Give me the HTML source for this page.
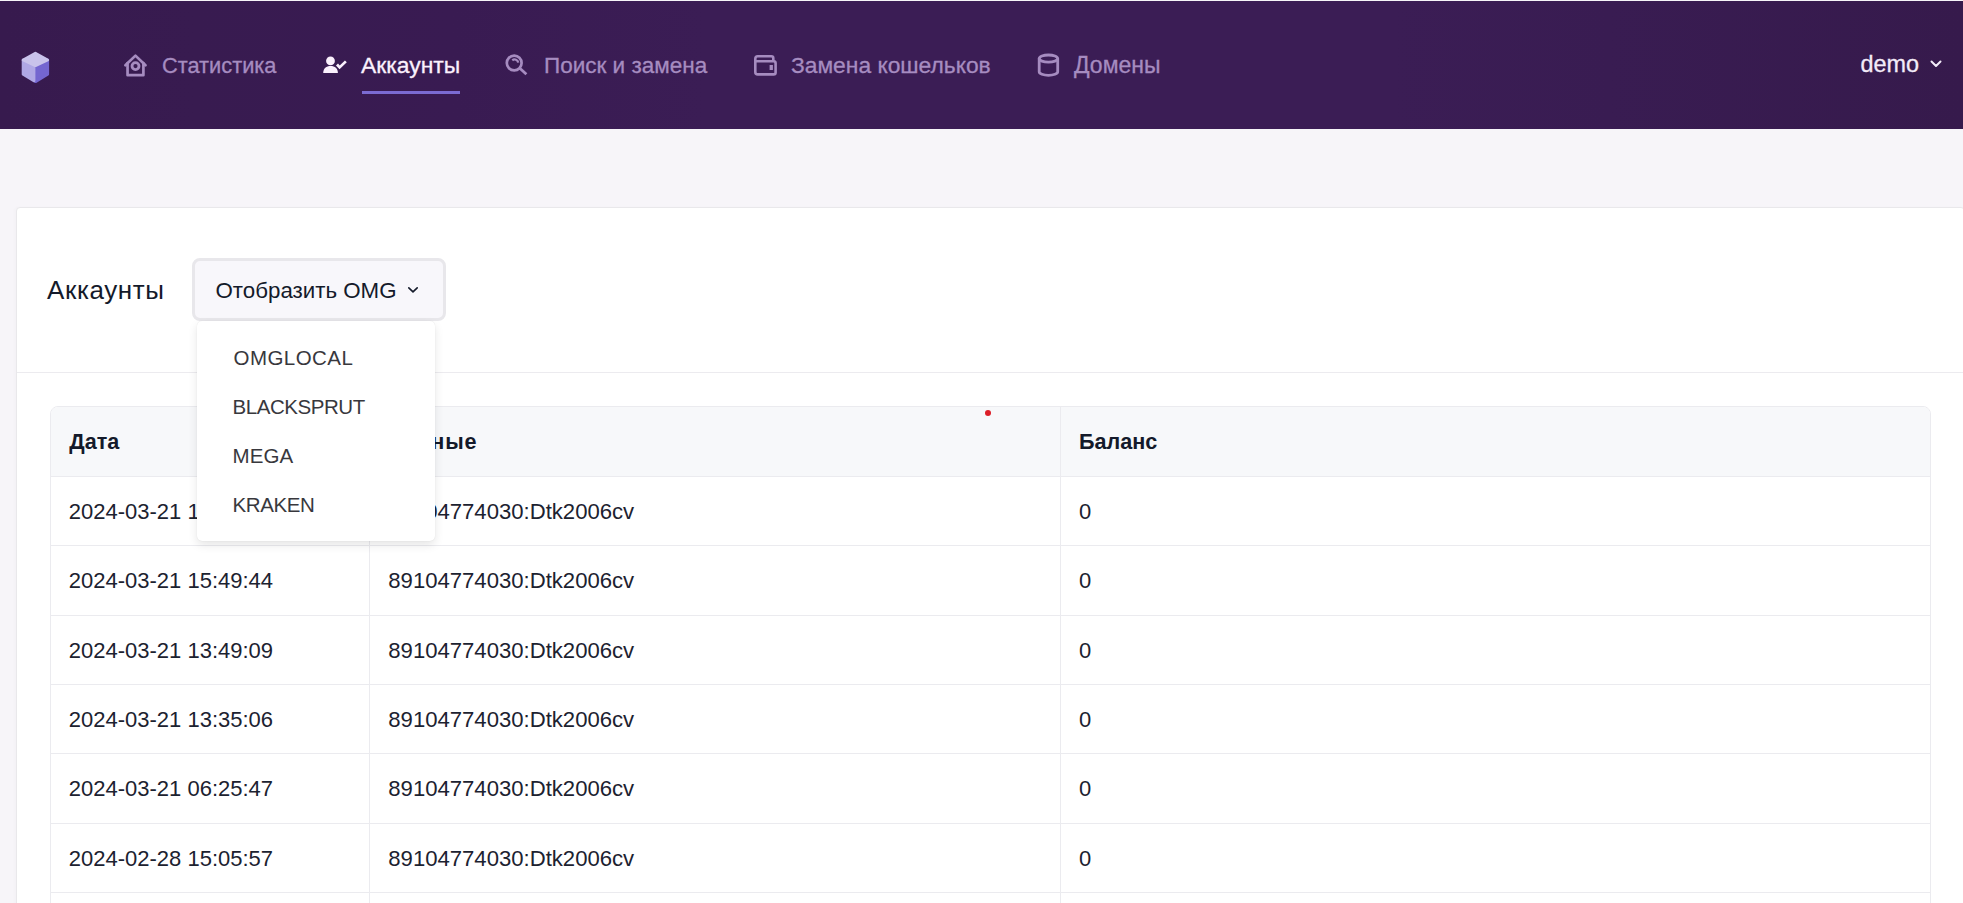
<!DOCTYPE html>
<html>
<head>
<meta charset="utf-8">
<style>
*{margin:0;padding:0;box-sizing:border-box;}
html,body{width:1963px;height:903px;overflow:hidden;}
body{background:#f7f5f9;font-family:"Liberation Sans",sans-serif;position:relative;}
.abs{position:absolute;white-space:nowrap;}
#hdr{position:absolute;left:0;top:1px;width:1963px;height:128px;background:linear-gradient(90deg,#371a4e 0%,#381b50 10%,#391b52 23%,#3b1d55 36%,#3b1d55 71%,#391c52 82%,#361a4c 100%);}
.nav{position:absolute;font-size:22px;line-height:22px;color:#a68cc0;white-space:nowrap;-webkit-text-stroke:0.3px currentColor;}
.nav.act{color:#fbf1fd;}
.ico{position:absolute;}
#card{position:absolute;left:16px;top:207px;width:1949px;height:720px;background:#fff;border:1px solid #e9e8eb;border-radius:4px;box-shadow:-2px 0 3px rgba(0,0,0,0.015);}
#sep{position:absolute;left:17px;top:372px;width:1946px;height:1px;background:#ecebef;}
#title{position:absolute;left:47px;top:277px;font-size:26px;line-height:26px;letter-spacing:0.6px;color:#141a2a;}
#btn{position:absolute;left:192.4px;top:258.1px;width:253.2px;height:62.5px;background:#f8f7fb;border:3.2px solid #e8e7eb;border-radius:8px;}
#btntxt{position:absolute;left:215.5px;top:280.3px;font-size:22.3px;line-height:22.3px;color:#141a2a;}
#tbl{position:absolute;left:50px;top:406px;width:1881px;height:600px;border:1px solid #ebebef;border-radius:8px 8px 0 0;background:#fff;overflow:hidden;}
#thead{position:absolute;left:0;top:0;width:100%;height:69px;background:#f7f8fa;}
.hl{position:absolute;left:0;width:100%;height:1px;background:#ebebef;}
.vl{position:absolute;top:0;width:1px;height:600px;background:#ebebef;}
.th{position:absolute;font-size:21.6px;line-height:21.6px;font-weight:bold;color:#141a2a;white-space:nowrap;}
.td{position:absolute;font-size:22px;line-height:22px;color:#1c2230;white-space:nowrap;}
#pop{position:absolute;left:197px;top:321px;width:238px;height:220px;background:#fff;border-radius:5px;box-shadow:0 4px 10px rgba(0,0,0,0.10),0 0 1px rgba(0,0,0,0.12);}
.it{position:absolute;font-size:20.5px;line-height:20.5px;letter-spacing:-0.45px;color:#38383d;white-space:nowrap;}
#dot{position:absolute;left:985.3px;top:410px;width:6px;height:6px;border-radius:50%;background:#dc1e28;}
</style>
</head>
<body>
<div id="hdr"></div>

<!-- logo cube -->
<svg class="ico" style="left:15px;top:45px" width="42" height="45" viewBox="0 0 42 45">
  <g stroke-width="3" stroke-linejoin="round">
  <path d="M32.6 15 L20.4 22 L20.4 36.6 L32.6 29.3 Z" fill="#7466d0" stroke="#7466d0"/>
  <path d="M8.2 15 L18.9 21.2 L18.9 35.7 L8.2 29.3 Z" fill="#b0a8e5" stroke="#b0a8e5"/>
  <path d="M20.4 8.2 L32.6 15 L20.4 20.6 L8.2 15 Z" fill="#c9c3eb" stroke="#c9c3eb"/>
  </g>
</svg>

<!-- house icon -->
<svg class="ico" style="left:120px;top:50px" width="32" height="30" viewBox="0 0 32 30">
  <g fill="none" stroke="#a68cc0" stroke-width="2.7" stroke-linecap="round" stroke-linejoin="round">
  <path d="M5.4 15.3 L15.45 5.6 L25.5 15.3"/>
  <path d="M7.55 13.2 V25.2 H23.4 V13.2"/>
  </g>
  <circle cx="15.5" cy="16.1" r="3.5" fill="none" stroke="#a68cc0" stroke-width="2.8"/>
</svg>
<div class="nav" style="left:162px;top:54.5px;font-size:21.8px">Статистика</div>

<!-- user check -->
<svg class="ico" style="left:322px;top:55px" width="26" height="20" viewBox="0 0 26 20">
  <circle cx="8.5" cy="5.9" r="4.4" fill="#fbf1fd"/>
  <path d="M1.2 17.9 C1.2 13.3 4.3 10.9 8.6 10.9 C12.9 10.9 15.9 13.3 15.9 17.9 Z" fill="#fbf1fd"/>
  <path d="M15.9 10.5 L17.6 12.4 L22.9 7.3" fill="none" stroke="#fbf1fd" stroke-width="2.7" stroke-linecap="square" stroke-linejoin="miter"/>
</svg>
<div class="nav act" style="left:361px;top:53.6px;font-size:22.9px">Аккаунты</div>
<div class="abs" style="left:362px;top:91px;width:98px;height:3px;background:#7b6bd2"></div>

<!-- search -->
<svg class="ico" style="left:500px;top:50px" width="32" height="30" viewBox="0 0 32 30">
  <circle cx="14.2" cy="13" r="7.4" fill="none" stroke="#a68cc0" stroke-width="2.7"/>
  <path d="M12.3 10.3 A3.6 3.6 0 0 1 18.2 12.7" fill="none" stroke="#a68cc0" stroke-width="2.3" stroke-linecap="butt"/>
  <path d="M19.8 18.3 L26.4 24.3" stroke="#a68cc0" stroke-width="2.8" stroke-linecap="butt"/>
</svg>
<div class="nav" style="left:544px;top:54.7px;font-size:22.5px">Поиск и замена</div>

<!-- wallet -->
<svg class="ico" style="left:748px;top:50px" width="34" height="30" viewBox="0 0 34 30">
  <g fill="none" stroke="#a68cc0" stroke-width="2.6" stroke-linejoin="round">
  <path d="M7.3 11.2 H25.6 Q27.6 11.2 27.6 13.2 V22.4 Q27.6 24.4 25.6 24.4 H9.8 Q7.3 24.4 7.3 21.9 Z"/>
  <path d="M7.3 11.2 V8.8 Q7.3 6.3 9.8 6.3 H23.3 Q25.3 6.3 25.3 8.3 V11.2"/>
  </g>
  <rect x="21.6" y="15" width="3.3" height="5" fill="#a68cc0"/>
</svg>
<div class="nav" style="left:791px;top:53.7px;font-size:22.8px">Замена кошельков</div>

<!-- database -->
<svg class="ico" style="left:1032px;top:50px" width="32" height="30" viewBox="0 0 32 30">
  <g fill="none" stroke="#a68cc0" stroke-width="2.8">
  <ellipse cx="16.45" cy="8.6" rx="9.25" ry="3.6"/>
  <path d="M7.2 8.6 V21.7 A9.25 3.6 0 0 0 25.7 21.7 V8.6"/>
  </g>
</svg>
<div class="nav" style="left:1074px;top:53.5px;font-size:23px">Домены</div>

<div class="nav act" style="left:1860.5px;top:53.3px;color:#f3ebf8;font-size:23.4px">demo</div>
<svg class="ico" style="left:1929px;top:58px" width="14" height="11" viewBox="0 0 14 11">
  <path d="M2.5 3.5 L7 8 L11.5 3.5" fill="none" stroke="#f3ebf8" stroke-width="2" stroke-linecap="round" stroke-linejoin="round"/>
</svg>

<div id="card"></div>
<div id="sep"></div>
<div id="title">Аккаунты</div>
<div id="btn"></div>
<div id="btntxt">Отобразить OMG</div>
<svg class="ico" style="left:406px;top:285px" width="14" height="10" viewBox="0 0 14 10">
  <path d="M2.8 2.8 L7 6.8 L11.2 2.8" fill="none" stroke="#141a2a" stroke-width="1.6" stroke-linecap="round" stroke-linejoin="round"/>
</svg>

<div id="tbl">
  <div id="thead"></div>
  <div class="hl" style="top:69px"></div>
  <div class="hl" style="top:138px"></div>
  <div class="hl" style="top:208px"></div>
  <div class="hl" style="top:277px"></div>
  <div class="hl" style="top:346px"></div>
  <div class="hl" style="top:416px"></div>
  <div class="hl" style="top:485px"></div>
  <div class="vl" style="left:318px"></div>
  <div class="vl" style="left:1009px"></div>
</div>
<div class="th" style="left:69.3px;top:430.7px">Дата</div>
<div class="th" style="left:388.5px;top:430.7px;letter-spacing:0.8px">Данные</div>
<div class="th" style="left:1079px;top:430.7px">Баланс</div>

<div class="td" style="left:68.8px;top:500.8px">2024-03-21 15:55:12</div>
<div class="td" style="left:388.3px;top:500.8px;font-size:22.12px">89104774030:Dtk2006cv</div>
<div class="td" style="left:1079px;top:500.8px">0</div>

<div class="td" style="left:68.8px;top:569.8px">2024-03-21 15:49:44</div>
<div class="td" style="left:388.3px;top:569.8px;font-size:22.12px">89104774030:Dtk2006cv</div>
<div class="td" style="left:1079px;top:569.8px">0</div>

<div class="td" style="left:68.8px;top:639.8px">2024-03-21 13:49:09</div>
<div class="td" style="left:388.3px;top:639.8px;font-size:22.12px">89104774030:Dtk2006cv</div>
<div class="td" style="left:1079px;top:639.8px">0</div>

<div class="td" style="left:68.8px;top:708.8px">2024-03-21 13:35:06</div>
<div class="td" style="left:388.3px;top:708.8px;font-size:22.12px">89104774030:Dtk2006cv</div>
<div class="td" style="left:1079px;top:708.8px">0</div>

<div class="td" style="left:68.8px;top:777.8px">2024-03-21 06:25:47</div>
<div class="td" style="left:388.3px;top:777.8px;font-size:22.12px">89104774030:Dtk2006cv</div>
<div class="td" style="left:1079px;top:777.8px">0</div>

<div class="td" style="left:68.8px;top:847.8px">2024-02-28 15:05:57</div>
<div class="td" style="left:388.3px;top:847.8px;font-size:22.12px">89104774030:Dtk2006cv</div>
<div class="td" style="left:1079px;top:847.8px">0</div>

<div id="dot"></div>

<div id="pop"></div>
<div class="it" style="left:233.5px;top:347.6px;letter-spacing:0.45px">OMGLOCAL</div>
<div class="it" style="left:232.6px;top:396.6px">BLACKSPRUT</div>
<div class="it" style="left:232.6px;top:445.6px;letter-spacing:0.1px">MEGA</div>
<div class="it" style="left:232.6px;top:494.6px;letter-spacing:-0.4px">KRAKEN</div>

</body>
</html>
